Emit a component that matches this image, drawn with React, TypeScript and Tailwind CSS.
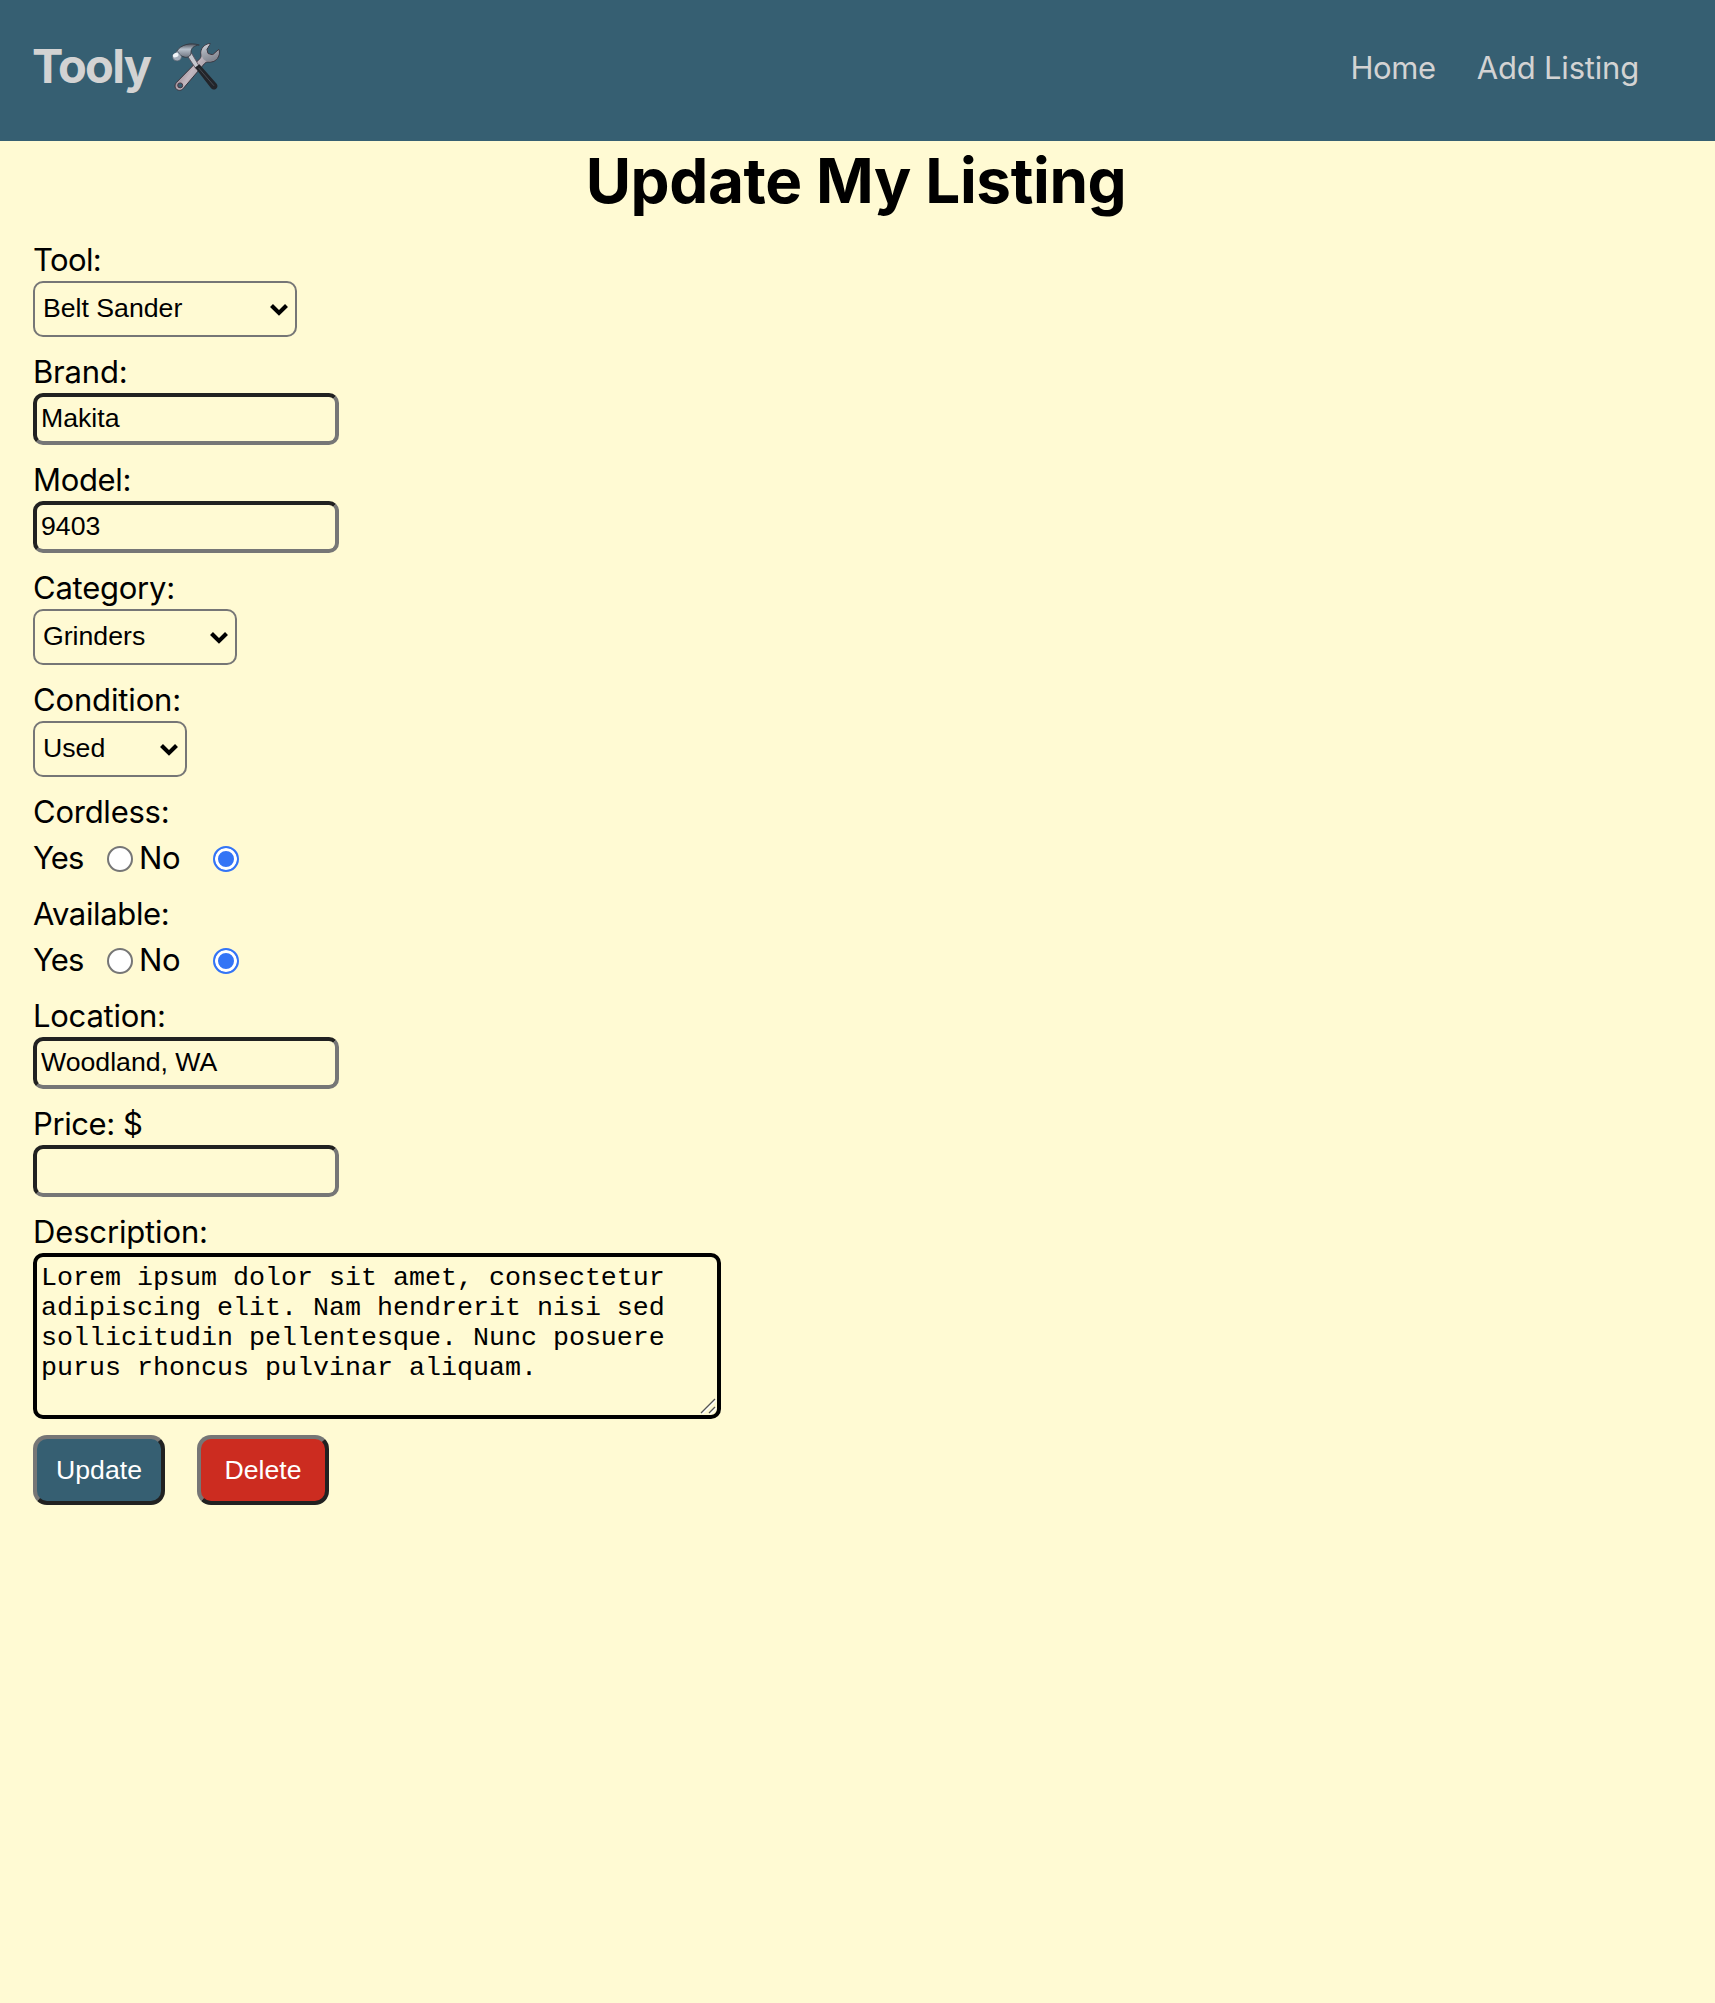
import type { ReactNode } from "react";

function ToolsIcon() {
  return (
    <svg className="h-[50px] w-[50px]" viewBox="0 0 50 50" aria-hidden="true">
      <defs>
        <linearGradient id="steel" x1="0" y1="0" x2="0.4" y2="1">
          <stop offset="0" stopColor="#d3d8df" />
          <stop offset="0.5" stopColor="#a3a7b0" />
          <stop offset="1" stopColor="#848791" />
        </linearGradient>
        <linearGradient id="shaft" x1="0" y1="0.2" x2="1" y2="0.8">
          <stop offset="0" stopColor="#68505c" />
          <stop offset="0.45" stopColor="#c3b8c0" />
          <stop offset="1" stopColor="#74727c" />
        </linearGradient>
        <linearGradient id="head" x1="0" y1="0" x2="0" y2="1">
          <stop offset="0" stopColor="#4b4f59" />
          <stop offset="0.4" stopColor="#b7c0cb" />
          <stop offset="1" stopColor="#6f7480" />
        </linearGradient>
      </defs>
      <path
        d="M39.200 1.600c-6 .5-9.900 5.200-9.200 10.400.2 1.800.1 3.200-1 4.500L5.400 40.500c-2 2.400-1.700 5.200.2 6.800 2.200 1.700 5.300 1.200 7-1.200L33.600 21.500c1.200-1.300 2.500-1.700 4.400-1.500 5.300.5 9.800-3.200 10.300-8.900.1-1.600-.1-2.800-.6-3.700L41.800 12.700l-4.700-.9-1.300-4.200z"
        fill="url(#shaft)"
        stroke="#3b343d"
        strokeWidth="1"
      />
      <path
        d="M38.800 2.100c-5.600.8-8.900 5.200-8.200 9.900.4 4.600 3.200 7.500 7.400 7.500 5.400.3 9.400-3.400 9.800-8.400.1-1.300 0-2.200-.4-2.900L42 13.400l-5.400-1.100-1.500-4.900z"
        fill="url(#steel)"
      />
      <circle cx="9.200" cy="43.400" r="2.500" fill="#365f72" stroke="#4b3540" strokeWidth="1" />
      <path d="M15.500 12.500l4.500-2.200 8 13.500-3.200 2.800z" fill="#c5c8cf" stroke="#5a4b58" strokeWidth="0.800" />
      <path d="M24 25.400l4.400-3.100 17.200 19.500c1.500 2 1 4.200-.8 5.300-1.800 1-3.900.5-5.100-1.300z" fill="#22252a" />
      <path d="M27.500 25.800l15.500 18" stroke="#484b52" strokeWidth="1" />
      <path
        d="M5.500 9.500C9.600 2.600 19.200.2 28.300 3c-5.400.6-8.400 3.200-8.200 7.200.1 3-2.600 5.600-5.900 5.100-1.800-.2-2.800-1.200-4.700-1.700L6 13z"
        fill="url(#head)"
        stroke="#343c46"
        strokeWidth="1"
      />
      <path d="M1.700 13.200l4.800-4.100 4.100 5.300c-.1 2.300-1.500 4.300-4.400 4.500-3.500-.2-5.200-2.600-4.500-5.700z" fill="#a4aebb" stroke="#56616e" strokeWidth="0.700" />
      <ellipse cx="4.700" cy="13.200" rx="2.900" ry="2.100" fill="#f1f5f9" transform="rotate(-25 4.700 13.200)" />
    </svg>
  );
}

function Field({ label, tracking, children }: { label: string; tracking: string; children: ReactNode }) {
  return (
    <div className="mb-4 flex flex-col items-start">
      <label className={`h-10 whitespace-nowrap text-[31px] leading-[38px] ${tracking}`}>{label}</label>
      {children}
    </div>
  );
}

function Select({ value, width }: { value: string; width: string }) {
  return (
    <div className={`relative h-14 ${width}`}>
      <select
        defaultValue={value}
        className="block h-14 w-full appearance-none rounded-[10px] border-2 border-[#767676] bg-transparent pb-[2px] pl-2 font-['Liberation_Sans',sans-serif] text-[26.67px] leading-[30px] text-black"
      >
        <option>{value}</option>
      </select>
      <svg className="pointer-events-none absolute right-[9px] top-[22px] h-[14px] w-[18px]" viewBox="0 0 18 14">
        <path d="M1.500 2.500L9 9.900l7.500-7.400" fill="none" stroke="#000" strokeWidth="4.200" />
      </svg>
    </div>
  );
}

function TextInput({ value }: { value: string }) {
  return (
    <input
      type="text"
      defaultValue={value}
      className="block h-[52px] w-[306px] rounded-[10px] border-4 border-b-[#767676] border-l-[#212121] border-r-[#767676] border-t-[#212121] bg-transparent px-1 pb-[2px] font-['Liberation_Sans',sans-serif] text-[26.67px] leading-[30px] text-black outline-none"
    />
  );
}

function YesNo({ name }: { name: string }) {
  return (
    <div className="flex h-[46px] items-start text-[31px]">
      <span className="w-[74px] leading-[50px] tracking-[-0.9px]">Yes</span>
      <input
        type="radio"
        name={name}
        className="mt-[13px] h-[26px] w-[26px] shrink-0 appearance-none rounded-full border-2 border-[#767676] bg-white"
      />
      <span className="ml-[6px] w-[74px] leading-[50px] tracking-[-0.3px]">No</span>
      <input
        type="radio"
        name={name}
        defaultChecked
        className="mt-[13px] h-[26px] w-[26px] shrink-0 appearance-none rounded-full border-2 border-[#3374f6] bg-[#3374f6] shadow-[inset_0_0_0_3px_white]"
      />
    </div>
  );
}

const buttonClass =
  "h-[70px] w-[132px] rounded-[14px] border-4 border-b-[#212121] border-l-[#767676] border-r-[#212121] border-t-[#767676] font-['Liberation_Sans',sans-serif] text-[26.67px] leading-[30px] text-white";

export default function App() {
  return (
    <div className="min-h-[2003px] w-full bg-[#fffad3] font-['Inter',sans-serif] text-black">
      <header className="flex h-[141px] items-start justify-between bg-[#365f72] pl-8 pr-[76px] text-[#d3d3d3]">
        <div className="flex items-start">
          <span className="mt-[38px] w-[139px] text-[47px] font-bold leading-[56px] tracking-[-1.7px]">Tooly</span>
          <div className="mt-[42px]">
            <ToolsIcon />
          </div>
        </div>
        <nav className="mt-[48px] flex gap-[41px] text-[31px] leading-[40px]">
          <a className="tracking-[-0.4px]">Home</a>
          <a className="tracking-[-0.2px]">Add Listing</a>
        </nav>
      </header>
      <h1 className="h-[100px] pr-[3px] pt-[2px] text-center text-[62px] font-bold leading-[76px] tracking-[-0.4px]">
        Update My Listing
      </h1>
      <form className="pl-[33px]">
        <Field label="Tool:" tracking="tracking-[-0.6px]">
          <Select value="Belt Sander" width="w-[264px]" />
        </Field>
        <Field label="Brand:" tracking="tracking-[-0.2px]">
          <TextInput value="Makita" />
        </Field>
        <Field label="Model:" tracking="tracking-[-0.35px]">
          <TextInput value="9403" />
        </Field>
        <Field label="Category:" tracking="tracking-[-0.25px]">
          <Select value="Grinders" width="w-[204px]" />
        </Field>
        <Field label="Condition:" tracking="tracking-[-0.15px]">
          <Select value="Used" width="w-[154px]" />
        </Field>
        <Field label="Cordless:" tracking="tracking-[-0.25px]">
          <YesNo name="cordless" />
        </Field>
        <Field label="Available:" tracking="tracking-[-0.35px]">
          <YesNo name="available" />
        </Field>
        <Field label="Location:" tracking="tracking-[-0.25px]">
          <TextInput value="Woodland, WA" />
        </Field>
        <Field label="Price: $" tracking="tracking-[-0.4px]">
          <TextInput value="" />
        </Field>
        <Field label="Description:" tracking="tracking-[-0.15px]">
          <div className="relative h-[166px] w-[688px]">
            <textarea
              defaultValue="Lorem ipsum dolor sit amet, consectetur adipiscing elit. Nam hendrerit nisi sed sollicitudin pellentesque. Nunc posuere purus rhoncus pulvinar aliquam."
              className="block h-[166px] w-[688px] resize-none overflow-hidden rounded-[10px] border-4 border-black bg-transparent pb-1 pl-1 pr-[34px] pt-[6px] font-['Liberation_Mono',monospace] text-[26.67px] leading-[30px] text-black outline-none"
            />
            <svg className="pointer-events-none absolute bottom-[5px] right-[5px] h-4 w-4" viewBox="0 0 16 16" fill="none">
              <path d="M2 16L16 2M10 16l6-6" stroke="#fff" strokeWidth="1.500" />
              <path d="M1 15L15 1M9 15l6-6" stroke="#555" strokeWidth="1.300" />
            </svg>
          </div>
        </Field>
        <div className="flex gap-8">
          <button type="button" className={`${buttonClass} bg-[#365f72]`}>Update</button>
          <button type="button" className={`${buttonClass} bg-[#cc2c20]`}>Delete</button>
        </div>
      </form>
    </div>
  );
}
